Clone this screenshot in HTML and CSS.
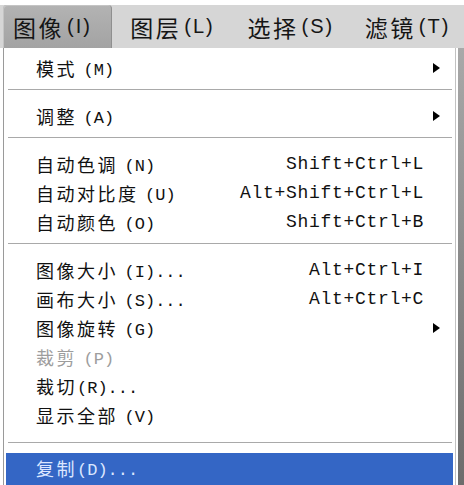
FILE: index.html
```html
<!DOCTYPE html>
<html lang="zh-CN">
<head>
    <meta charset="UTF-8">
    <title>图像菜单</title>
    <link rel="stylesheet" href="styles.css">
</head>
<body>
    <div class="menubar">
        <div class="menubar-item active">图像<span class="key">(I)</span></div>
        <div class="menubar-item">图层<span class="key">(L)</span></div>
        <div class="menubar-item">选择<span class="key">(S)</span></div>
        <div class="menubar-item">滤镜<span class="key">(T)</span></div>
    </div>

    <div class="main">
        <div class="menu">
            <div class="item"><span class="label">模式 <span class="key">(M)</span></span><span class="arrow"></span></div>
            <div class="sep"></div>
            <div class="item"><span class="label">调整 <span class="key">(A)</span></span><span class="arrow"></span></div>
            <div class="sep"></div>
            <div class="item"><span class="label">自动色调 <span class="key">(N)</span></span><span class="shortcut">Shift+Ctrl+L</span></div>
            <div class="item"><span class="label">自动对比度 <span class="key">(U)</span></span><span class="shortcut">Alt+Shift+Ctrl+L</span></div>
            <div class="item"><span class="label">自动颜色 <span class="key">(O)</span></span><span class="shortcut">Shift+Ctrl+B</span></div>
            <div class="sep"></div>
            <div class="item"><span class="label">图像大小 <span class="key">(I)...</span></span><span class="shortcut">Alt+Ctrl+I</span></div>
            <div class="item"><span class="label">画布大小 <span class="key">(S)...</span></span><span class="shortcut">Alt+Ctrl+C</span></div>
            <div class="item"><span class="label">图像旋转 <span class="key">(G)</span></span><span class="arrow"></span></div>
            <div class="item disabled"><span class="label">裁剪 <span class="key">(P)</span></span></div>
            <div class="item"><span class="label">裁切<span class="key">(R)...</span></span></div>
            <div class="item"><span class="label">显示全部 <span class="key">(V)</span></span></div>
            <div class="sep wide"></div>
            <div class="item selected"><span class="label">复制<span class="key">(D)...</span></span></div>
        </div>
        <div class="edge"></div>
    </div>
</body>
</html>
```

FILE: styles.css
```css
* {
    box-sizing: border-box;
}
body {
    margin: 0;
    width: 464px;
    height: 485px;
    overflow: hidden;
    background: #fff;
    font-family: "Liberation Mono", "Noto Sans CJK SC", monospace;
    color: #111;
}

/* top menu bar */
.menubar {
    margin-top: 5px;
    height: 43px;
    background: #d6d6d6;
    display: flex;
    gap: 8px;
    padding-left: 3px;
}
.menubar-item {
    width: 110px;
    padding-left: 10px;
    display: flex;
    align-items: center;
    font-family: "Noto Sans CJK SC", sans-serif;
    font-size: 23px;
    letter-spacing: 2.5px;
    color: #151515;
}
.menubar-item.active {
    background: linear-gradient(#b3b3b3, #a3a3a3);
    border-radius: 4px 4px 0 0;
    box-shadow: inset 1px 1px 0 #c4c4c4, inset -1px 0 0 #8f8f8f;
}
.menubar-item .key {
    font-family: "Liberation Sans", sans-serif;
    font-size: 20px;
    letter-spacing: 2px;
    margin-left: 3px;
}

/* dropdown */
.main {
    display: flex;
    height: 437px;
}
.menu {
    margin-left: 3px;
    width: 453px;
    border-left: 1px solid #9a9a9a;
    border-right: 1px solid #c2c2c2;
    padding: 5px 2px 0 2px;
}
.item {
    display: flex;
    align-items: center;
    justify-content: space-between;
    height: 29px;
    padding-left: 30px;
    padding-right: 13px;
    white-space: nowrap;
}
.label {
    font-family: "Noto Sans CJK SC", sans-serif;
    font-size: 18px;
    letter-spacing: 2.5px;
}
.label .key {
    font-family: "Liberation Mono", monospace;
    font-size: 17px;
    letter-spacing: 0;
    vertical-align: 1px;
}
.item.disabled {
    color: #9d9d9d;
}
.item.selected {
    height: 32px;
    padding-bottom: 3px;
    background: #3466c5;
    color: #dce6ff;
}
.shortcut {
    font-size: 18px;
    letter-spacing: 0.7px;
    margin-right: 16px;
}
.arrow {
    width: 0;
    height: 0;
    border-left: 7px solid #000;
    border-top: 5px solid transparent;
    border-bottom: 5px solid transparent;
}
.sep {
    height: 2px;
    margin: 7px 1px 10px 2px;
    border-top: 1px solid #a9a9a9;
    border-bottom: 1px solid #fff;
}
.sep.wide {
    margin-top: 13px;
    margin-bottom: 9px;
}

/* window behind the menu */
.edge {
    width: 6px;
    margin-left: 2px;
    background: linear-gradient(#a9a9a9, #8a8a8a 50%, #6c6c6c);
}
```
